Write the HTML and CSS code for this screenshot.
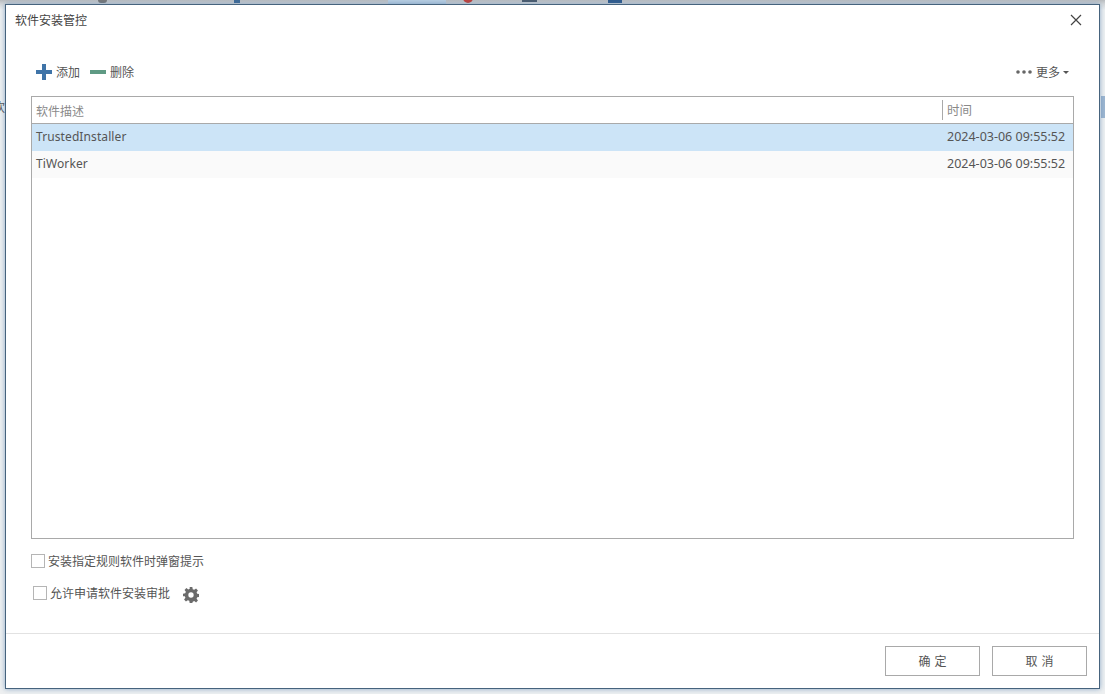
FILE: index.html
```html
<!DOCTYPE html>
<html lang="zh-CN">
<head>
    <meta charset="UTF-8">
    <title>软件安装管控</title>
    <link rel="stylesheet" href="styles.css">
</head>
<body>
    <!-- bits of the main window showing behind the dialog -->
    <div class="backdrop">
        <span class="back-tab"></span>
        <span class="back-dot"></span>
        <span class="back-bit bit-a"></span>
        <span class="back-bit bit-b"></span>
        <span class="back-bit bit-c"></span>
        <span class="back-bit bit-d"></span>
        <span class="back-text">欢</span>
        <span class="back-mark"></span>
    </div>

    <div class="dialog">
        <div class="title-bar">
            <span class="title">软件安装管控</span>
            <svg class="close" width="12" height="12" viewBox="0 0 12 12">
                <path d="M1 1L11 11M11 1L1 11" stroke="#444" stroke-width="1.2" fill="none"/>
            </svg>
        </div>

        <div class="content">
            <div class="toolbar">
                <div class="tool">
                    <svg width="16" height="16" viewBox="0 0 16 16">
                        <path d="M6 0h4v6h6v4h-6v6H6v-6H0V6h6z" fill="#3f74a8"/>
                    </svg>
                    <span>添加</span>
                </div>
                <div class="tool">
                    <svg width="16" height="4" viewBox="0 0 16 4">
                        <rect width="16" height="4" fill="#5f9a84"/>
                    </svg>
                    <span>删除</span>
                </div>
                <div class="tool more">
                    <svg width="16" height="4" viewBox="0 0 16 4">
                        <circle cx="2" cy="2" r="1.8" fill="#666"/>
                        <circle cx="8" cy="2" r="1.8" fill="#666"/>
                        <circle cx="14" cy="2" r="1.8" fill="#666"/>
                    </svg>
                    <span>更多</span>
                    <i class="caret"></i>
                </div>
            </div>

            <div class="table">
                <div class="row head">
                    <div class="cell name">软件描述</div>
                    <div class="cell time">时间</div>
                </div>
                <div class="row selected">
                    <div class="cell name">TrustedInstaller</div>
                    <div class="cell time">2024-03-06 09:55:52</div>
                </div>
                <div class="row alt">
                    <div class="cell name">TiWorker</div>
                    <div class="cell time">2024-03-06 09:55:52</div>
                </div>
            </div>

            <div class="options">
                <label class="check first"><i class="box"></i>安装指定规则软件时弹窗提示</label>
                <div class="check second">
                    <i class="box"></i>
                    <span>允许申请软件安装审批</span>
                    <svg class="gear" width="16" height="16" viewBox="0 0 24 24">
                        <path fill="#6b6b6b" fill-rule="evenodd" d="M10 0h4l.6 3.4 2.2.9L19.6 2.3l2.8 2.8-2 2.8.9 2.2 3.4.6v4l-3.4.6-.9 2.2 2 2.8-2.8 2.8-2.8-2-2.2.9L14 24h-4l-.6-3.4-2.2-.9-2.8 2-2.8-2.8 2-2.8-.9-2.2L0 14v-4l3.4-.6.9-2.2-2-2.8 2.8-2.8 2.8 2 2.2-.9zM12 8a4 4 0 1 0 0 8 4 4 0 0 0 0-8z"/>
                    </svg>
                </div>
            </div>
        </div>

        <div class="footer">
            <button class="btn">确 定</button>
            <button class="btn">取 消</button>
        </div>
    </div>
</body>
</html>
```

FILE: styles.css
```css
* {
    box-sizing: border-box;
}

html, body {
    height: 100%;
}

body {
    margin: 0;
    padding: 4px 5px 5px 5px;
    background-color: #e9ecee;
    font-family: "Noto Sans", "Noto Sans CJK SC", sans-serif;
    font-size: 12px;
    color: #444;
    overflow: hidden;
}

/* main window behind the dialog */
.backdrop {
    position: absolute;
    top: 0;
    left: 0;
    width: 1105px;
    height: 694px;
    background: linear-gradient(#b9bcbf, #d5d8da 4px, #eef0f1 10px);
}

.back-tab {
    position: absolute;
    top: 0;
    left: 388px;
    width: 58px;
    height: 4px;
    background-color: #b9cfe2;
}

.back-dot {
    position: absolute;
    top: -7px;
    left: 463px;
    width: 10px;
    height: 10px;
    border-radius: 50%;
    background-color: #c0403a;
}

.back-bit {
    position: absolute;
    top: 0;
    height: 3px;
    background-color: #4a5a6c;
}

.bit-a {
    left: 98px;
    width: 9px;
    border-radius: 0 0 4px 4px;
    background-color: #777;
}

.bit-b {
    left: 234px;
    width: 6px;
    background-color: #3f6a96;
}

.bit-c {
    left: 522px;
    width: 15px;
    height: 2px;
}

.bit-d {
    left: 608px;
    width: 14px;
    background-color: #2f5a8c;
}

.back-text {
    position: absolute;
    top: 98px;
    left: -7px;
    font-size: 12px;
    color: #555;
}

.back-mark {
    position: absolute;
    top: 96px;
    left: 1101px;
    width: 4px;
    height: 22px;
    background-color: #9db6d0;
}

.dialog {
    position: relative;
    display: flex;
    flex-direction: column;
    width: 1095px;
    height: 685px;
    background-color: #fff;
    border: 1px solid #46637d;
    box-shadow: 0 0 5px rgba(70, 120, 170, 0.6);
}

.title-bar {
    display: flex;
    justify-content: space-between;
    align-items: center;
    height: 30px;
    padding: 0 17px 0 9px;
}

.title {
    font-size: 12px;
    color: #444;
}

.content {
    flex: 1;
    padding: 0 25px;
}

.toolbar {
    display: flex;
    align-items: center;
    gap: 10px;
    height: 24px;
    margin-top: 25px;
    padding-left: 5px;
    padding-right: 5px;
}

.tool {
    display: flex;
    align-items: center;
    gap: 4px;
    color: #555;
}

.more {
    margin-left: auto;
}

.caret {
    width: 0;
    height: 0;
    margin-left: -1px;
    border-left: 3px solid transparent;
    border-right: 3px solid transparent;
    border-top: 3px solid #555;
}

.table {
    height: 443px;
    margin-top: 12px;
    border: 1px solid #a9a9a9;
}

.row {
    display: flex;
    height: 27px;
    align-items: center;
}

.head {
    height: 27px;
    border-bottom: 1px solid #a9a9a9;
    color: #8a8a8a;
}

.selected {
    background-color: #cce4f7;
}

.alt {
    background-color: #fafafa;
}

.cell {
    font-size: 12px;
    letter-spacing: 0.1px;
    padding-left: 4px;
    padding-bottom: 2px;
    color: #555;
}

.head .cell {
    padding-top: 1px;
    padding-bottom: 0;
    letter-spacing: 0;
    color: #8a8a8a;
}

.name {
    flex: 1;
}

.time {
    width: 131px;
    padding-left: 5px;
    font-size: 12.5px;
    letter-spacing: 0;
    white-space: nowrap;
}

.head .time {
    height: 20px;
    padding-left: 4px;
    line-height: 20px;
    border-left: 1px solid #a9a9a9;
}

.options {
    padding-top: 13px;
}

.check {
    display: flex;
    align-items: center;
    gap: 3px;
    color: #555;
}

.first {
    height: 17px;
}

.second {
    height: 20px;
    margin-top: 14px;
    padding-left: 2px;
}

.box {
    width: 14px;
    height: 14px;
    border: 1px solid #b5b5b5;
    background-color: #fff;
}

.gear {
    margin-left: 10px;
    margin-top: 3px;
}

.footer {
    display: flex;
    justify-content: flex-end;
    gap: 12px;
    height: 55px;
    padding: 12px 12px 0 0;
    border-top: 1px solid #e2e2e2;
}

.btn {
    width: 95px;
    height: 30px;
    font-family: inherit;
    font-size: 12px;
    word-spacing: 1px;
    color: #555;
    background-color: #fff;
    border: 1px solid #a9a9a9;
}
```
